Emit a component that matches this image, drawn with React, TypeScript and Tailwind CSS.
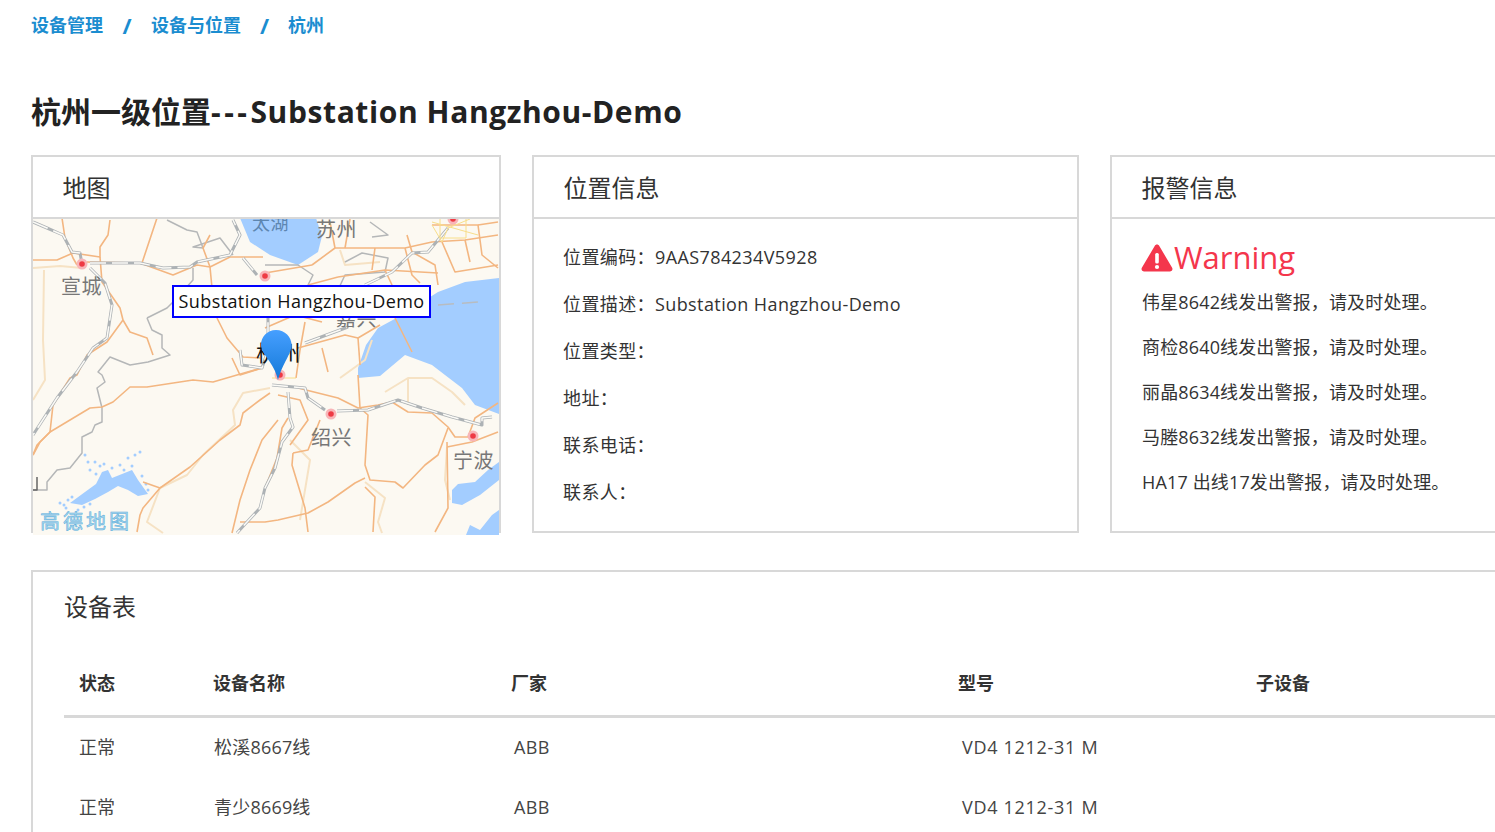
const FONT = "font-['Open_Sans','Noto_Sans_CJK_SC',sans-serif]";

// map lines are written in page coordinates, the svg viewBox starts at 33,219
const roads = [
  '62,218 65,238 73,258 77,265',
  '33,260 57,260 73,253 100,257 100,247 108,235 110,220',
  '100,257 102,282 120,308 123,320 130,332 147,338 153,355',
  '123,320 107,342 87,355 77,375 70,378 53,405 50,432 37,445 33,455',
  '87,262 140,263 173,275 197,265 210,267 230,257 263,257',
  '157,218 147,248 142,263',
  '210,235 203,248 210,267 212,288',
  '217,318 227,338 243,357 260,358',
  '33,455 40,442 50,432 90,408 102,407 113,402 130,387 147,387 193,380 213,382 237,375 262,368',
  '270,393 260,400 243,413 240,425 220,440 190,467 160,488 143,508 140,515 137,532',
  '160,488 143,482',
  '358,375 360,408 368,415 365,465 370,480 395,482 403,488 425,465 438,455 448,428',
  '298,388 338,398 358,408 378,405 392,402 408,412 432,413 448,427 455,437 468,437 475,418 498,403',
  '288,418 282,428 277,458 265,488',
  '293,453 308,450 320,420',
  '293,453 292,465 305,508 308,532',
  '365,478 355,483 328,502 308,513 278,520 265,522 240,522',
  '365,487 375,497 373,532',
  '447,442 448,508 435,532',
  '447,447 472,442 498,432',
  '312,265 335,248 375,248 405,248 432,242 465,240 498,235',
  '407,235 412,252 435,265 438,285',
  '432,225 478,225 482,255 498,268',
  '442,242 455,272 498,265',
  '265,273 312,265',
  '338,277 385,270 438,273',
  '308,285 338,277',
  '265,328 295,315 322,322',
  '298,348 345,335 358,338 380,325',
  '322,348 328,372',
  '358,338 360,365',
  '395,318 412,352',
  '232,358 240,375 262,368',
  '296,378 300,350 305,322',
  '405,248 412,275 420,283',
  '465,240 470,262',
  '375,248 372,270',
  '335,248 330,222',
  '350,219 345,248',
  '478,225 498,222',
  '385,270 392,285',
  '278,420 262,440 250,470 240,500 232,533',
  '278,395 300,400 308,420 290,445',
];

const lightRoads = [
  '33,268 60,266 82,268',
  '44,270 43,340 45,380 33,400',
  '270,388 243,393 233,410 235,425 203,455 187,475 160,488 147,522 163,533',
  '385,392 408,378 432,378 452,392 465,405',
  '408,378 408,405',
  '365,482 385,498 378,522 382,533',
  '447,447 445,480 450,500',
  '290,440 310,460 300,520',
  '340,250 345,265 380,262',
  '340,378 365,360 372,340',
];

const highways = [
  '33,222 47,228 63,235 72,252 80,253 82,264',
  '90,263 140,263 163,268 190,267 197,262 230,255 240,235 233,220',
  '243,258 257,275',
  '90,268 105,283 112,305 107,338 93,348 77,372 73,377 57,398 33,435',
  '272,385 305,388 308,398 325,410',
  '337,411 368,410 398,400 422,408 452,417 482,425 482,418 492,417',
  '288,392 290,418 293,427 282,442 275,468 265,488 260,508 247,522 237,533',
  '365,285 392,272 412,253 428,252 448,228',
  '305,343 348,327',
  '240,350 242,365 262,368 268,350 268,300 268,285',
];

const borders = [
  '147,318 167,308 175,300 193,280 193,268',
  '147,318 152,330 162,335 162,348 170,355 148,362 130,365 110,357 98,372 102,375 105,382 97,388 102,408 102,422 95,425 92,432 82,437 82,453 70,468 57,470 47,482 47,490 33,490',
  '167,220 187,230 197,232 203,248 193,247 220,238 233,255',
  '265,265 298,265 313,275 308,285',
  '345,262 362,253 388,258 385,272 345,275 338,290',
  '372,237 388,235 370,222',
];

const dots = [
  [82, 264],
  [265, 276],
  [280, 375],
  [331, 414],
  [473, 436],
  [453, 219],
];

const lakeSpecks = [
  [100, 466], [95, 462], [85, 455], [90, 470], [120, 465], [128, 458], [135, 455], [140, 452], [112, 468],
  [64, 505], [68, 500], [60, 503], [78, 510], [90, 504], [88, 462], [148, 490], [142, 476], [132, 466],
  [96, 474], [104, 464], [124, 470], [72, 497], [66, 508], [84, 507], [146, 484],
];

const labels = [
  { text: '宣城', x: 61, y: 294 },
  { text: '苏州', x: 316, y: 237 },
  { text: '绍兴', x: 311, y: 445 },
  { text: '宁波', x: 453, y: 468 },
  { text: '嘉兴', x: 336, y: 326 },
];

const positionInfo = [
  '位置编码：9AAS784234V5928',
  '位置描述：Substation Hangzhou-Demo',
  '位置类型：',
  '地址：',
  '联系电话：',
  '联系人：',
];

const warnings = [
  '伟星8642线发出警报，请及时处理。',
  '商检8640线发出警报，请及时处理。',
  '丽晶8634线发出警报，请及时处理。',
  '马塍8632线发出警报，请及时处理。',
  'HA17 出线17发出警报，请及时处理。',
];

const devices = [
  { status: '正常', name: '松溪8667线', maker: 'ABB', model: 'VD4 1212-31 M' },
  { status: '正常', name: '青少8669线', maker: 'ABB', model: 'VD4 1212-31 M' },
];

function MapView() {
  return (
    <svg className="block w-full h-full" viewBox="33 219 466 316" fill="none">
      <rect x="33" y="219" width="466" height="316" fill="#fcf9f2" />
      <g fill="#a3cdff">
        <path d="M240 218 L250 242 L270 255 L298 265 L318 252 L322 236 L316 218 Z" />
        <path d="M499 278 L465 282 L438 292 L402 315 L378 328 L366 345 L358 368 L358 378 L380 376 L405 355 L432 365 L445 375 L462 388 L475 405 L499 414 Z" />
        <path d="M452 490 L458 484 L475 482 L488 470 L499 462 L499 480 L480 495 L462 505 L452 503 Z" />
        <path d="M466 535 L470 525 L480 530 L492 515 L499 510 L499 535 Z" />
        <path d="M70 503 L85 492 L96 484 L102 472 L108 470 L112 478 L122 474 L132 470 L138 480 L148 494 L138 496 L128 490 L118 486 L108 492 L95 499 L82 505 Z" />
        {lakeSpecks.map(([cx, cy]) => (
          <circle key={`${cx}-${cy}`} cx={cx} cy={cy} r="1.500" />
        ))}
      </g>
      <g strokeWidth="2" strokeLinejoin="round">
        {lightRoads.map((points) => (
          <polyline key={points} points={points} stroke="#f6e2c4" />
        ))}
      </g>
      <g stroke="#b5b7b8" strokeWidth="1.500" strokeLinejoin="round">
        {borders.map((points) => (
          <polyline key={points} points={points} />
        ))}
        <polyline points="37,477 37,490 33,490" stroke="#666" />
      </g>
      <g stroke="#f3b681" strokeWidth="1.600" strokeLinejoin="round">
        {roads.map((points) => (
          <polyline key={points} points={points} />
        ))}
      </g>
      <g strokeLinejoin="round">
        {highways.map((points) => (
          <g key={points}>
            <polyline points={points} stroke="#adb2b5" strokeWidth="3" />
            <polyline points={points} stroke="#fbfaf6" strokeWidth="1.500" strokeDasharray="16 6" />
          </g>
        ))}
      </g>
      <g stroke="#f8de8a" strokeWidth="1">
        <polyline points="432,222 478,235" />
        <polyline points="432,225 442,242 448,228 470,219" />
        <polyline points="440,219 440,238 466,238 466,219" />
        <polyline points="272,378 296,378" />
      </g>
      <polyline points="438,305 478,302" stroke="#b8bcc0" strokeWidth="1.500" strokeDasharray="16 8" />
      {dots.map(([cx, cy]) => (
        <g key={cx}>
          <circle cx={cx} cy={cy} r="5.500" fill="#f8b5b8" />
          <circle cx={cx} cy={cy} r="2.800" fill="#ee3a44" />
        </g>
      ))}
      <text x="252" y="230" fontSize="18" fill="#5d86b0" fontFamily="'Noto Sans CJK SC', sans-serif">
        太湖
      </text>
      {labels.map((label) => (
        <text
          key={label.text}
          x={label.x}
          y={label.y}
          fontSize="20"
          fill="#777"
          fontFamily="'Noto Sans CJK SC', sans-serif"
        >
          {label.text}
        </text>
      ))}
      <text x="256" y="361" fontSize="22" fill="#111" fontFamily="'Noto Sans CJK SC', sans-serif">
        杭州
      </text>
      <text
        x="40"
        y="529"
        fontSize="20"
        fill="#a9d6ee"
        stroke="#5aaedc"
        strokeWidth="0.500"
        fontFamily="'Noto Sans CJK SC', sans-serif"
        letterSpacing="3"
      >
        高德地图
      </text>
      <defs>
        <linearGradient id="pin" x1="0" y1="0" x2="0" y2="1">
          <stop offset="0" stopColor="#469fff" />
          <stop offset="1" stopColor="#1479d8" />
        </linearGradient>
      </defs>
      <path
        d="M276 330 C285 330 291.500 337 291.500 345 C291.500 354 283 362 278 380 C274 362 261 354 261 345 C261 337 267 330 276 330 Z"
        fill="url(#pin)"
      />
    </svg>
  );
}

function WarningIcon() {
  return (
    <svg className="w-[32px] h-[29px] shrink-0 -ml-[1px]" viewBox="0 0 32 29">
      <path
        d="M16 1.500 C17 1.500 17.800 2 18.300 3 L31 24.500 C32.200 26.500 31 28.500 28.800 28.500 L3.200 28.500 C1 28.500 -0.200 26.500 1 24.500 L13.700 3 C14.200 2 15 1.500 16 1.500 Z"
        fill="#f4364c"
      />
      <rect x="14.200" y="10" width="3.600" height="10.500" rx="1.500" fill="#fff" />
      <circle cx="16" cy="24" r="2.100" fill="#fff" />
    </svg>
  );
}

function Card({ title, width, children }: { title: string; width: string; children: React.ReactNode }) {
  return (
    <section className={`${width} h-[378px] shrink-0 border-2 border-[#d8d8d8] flex flex-col`}>
      <h2 className="h-[62px] shrink-0 border-b-2 border-[#d8d8d8] pl-[29.500px] text-[24px] leading-[62px] font-normal tracking-normal text-[#333]">
        {title}
      </h2>
      {children}
    </section>
  );
}

export default function App() {
  return (
    <div className={`${FONT} w-[1495px] h-[832px] overflow-hidden bg-white pl-[31px] text-[18px] tracking-[0.4px] text-[#333]`}>
      <nav className="h-[50px] flex items-center font-bold tracking-normal text-[#1b8dd0] text-[18px]">
        <span>设备管理</span>
        <span className="w-[48px] text-center text-[22px] leading-[22px]">/</span>
        <span>设备与位置</span>
        <span className="w-[47px] text-center text-[22px] leading-[22px]">/</span>
        <span>杭州</span>
      </nav>
      <h1 className="mt-[37px] h-[50px] text-[30px] leading-[50px] font-bold tracking-normal text-[#222]">
        杭州一级位置<span className="tracking-[3.500px]">---</span>
        <span className="tracking-[0.6px]">Substation Hangzhou-Demo</span>
      </h1>
      <div className="mt-[18px] flex gap-[31px] w-[1800px]">
        <Card title="地图" width="w-[470px]">
          <div className="relative h-[316px] shrink-0">
            <MapView />
            <div className="absolute left-[139px] top-[66px] h-[33px] w-[259px] border-2 border-[#0000ff] bg-white text-center text-[18px] leading-[29px] text-[#111]">
              Substation Hangzhou-Demo
            </div>
          </div>
        </Card>
        <Card title="位置信息" width="w-[547px]">
          <div className="pl-[29px] pt-[15px]">
            {positionInfo.map((line) => (
              <p key={line} className="h-[47px] leading-[47px]">
                {line}
              </p>
            ))}
          </div>
        </Card>
        <Card title="报警信息" width="w-[547px]">
          <div className="pl-[30px] pt-[18px]">
            <div className="flex items-center h-[40px] text-[31px] leading-[40px] tracking-normal text-[#f4364c]">
              <WarningIcon />
              <span className="ml-[1px]">Warning</span>
            </div>
            <div className="pt-[3px] tracking-[0.15px]">
              {warnings.map((line) => (
                <p key={line} className="h-[45px] leading-[45px]">
                  {line}
                </p>
              ))}
            </div>
          </div>
        </Card>
      </div>
      <section className="mt-[37px] w-[1800px] border-2 border-[#d8d8d8] pl-[31px] pt-[15px]">
        <h2 className="h-[40px] text-[24px] leading-[40px] font-normal tracking-normal text-[#333]">设备表</h2>
        <table className="mt-[26px] table-fixed w-[1700px] text-left">
          <colgroup>
            <col className="w-[134px]" />
            <col className="w-[298px]" />
            <col className="w-[447px]" />
            <col className="w-[298px]" />
            <col className="w-[298px]" />
            <col />
          </colgroup>
          <thead>
            <tr className="h-[63px] border-b-[3px] border-[#d8d8d8] tracking-normal">
              <th className="pl-[15px] font-bold">状态</th>
              <th className="pl-[15px] font-bold">设备名称</th>
              <th className="pl-[15px] font-bold">厂家</th>
              <th className="pl-[15px] font-bold">型号</th>
              <th className="pl-[15px] font-bold">子设备</th>
              <th />
            </tr>
          </thead>
          <tbody className="text-[#444]">
            {devices.map((device) => (
              <tr key={device.name} className="h-[60px]">
                <td className="pl-[15px] pt-[2px] tracking-normal">{device.status}</td>
                <td className="pl-[16px] pt-[2px] tracking-[0.2px]">{device.name}</td>
                <td className="pl-[18px] pt-[2px]">{device.maker}</td>
                <td className="pl-[19px] pt-[2px] tracking-[0.7px]">{device.model}</td>
                <td />
                <td />
              </tr>
            ))}
          </tbody>
        </table>
      </section>
    </div>
  );
}
